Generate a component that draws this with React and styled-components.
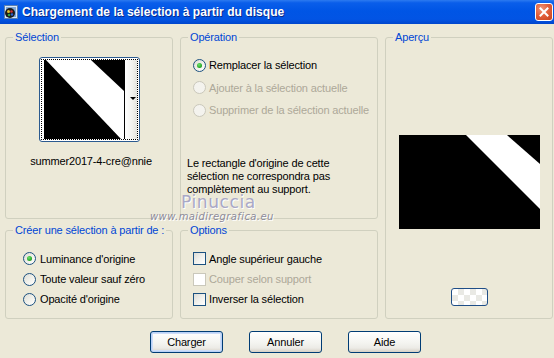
import React from "react";
import styled, { createGlobalStyle, css } from "styled-components";

const Global = createGlobalStyle`
  html, body { margin: 0; padding: 0; background: #ECE9D8; }
  body { font-family: "Liberation Sans", Arial, sans-serif; font-size: 11px; color: #000; letter-spacing: -0.15px; }
  * { box-sizing: border-box; }
`;

const Window = styled.div`
  position: relative;
  width: 554px;
  height: 358px;
  background: #ECE9D8;
  display: flex;
  flex-direction: column;
  overflow: hidden;
`;

const TitleBar = styled.div`
  height: 24px;
  display: flex;
  align-items: center;
  padding: 0 1px 0 3px;
  gap: 3px;
  background: linear-gradient(to bottom, #2C7AF0 0%, #0A5EEA 12%, #0055E5 45%, #0254E4 80%, #0046CC 100%);
`;

const Title = styled.div`
  flex: 1;
  color: #fff;
  font-weight: bold;
  font-size: 12px;
  letter-spacing: 0.05px;
  text-shadow: 1px 1px 0 #0A2A8A;
  white-space: nowrap;
`;

const CloseBtn = styled.div`
  width: 18px;
  height: 18px;
  border: 1px solid #fff;
  border-radius: 3px;
  background: radial-gradient(circle at 35% 30%, #F0957A 0%, #E2603C 45%, #C8411C 100%);
  display: flex;
  align-items: center;
  justify-content: center;
`;

const Content = styled.div`
  display: grid;
  grid-template-columns: 168px 198px 168px;
  grid-template-rows: 188px 95px;
  column-gap: 7px;
  row-gap: 5px;
  padding: 7px 0 0 5px;
`;

const Group = styled.fieldset`
  margin: 0;
  padding: ${(p) => p.$top || 0}px 0 0 0;
  min-width: 0;
  border: 1px solid #D0D0BF;
  border-radius: 3px;
  display: flex;
  flex-direction: column;
  align-items: ${(p) => p.$align || "stretch"};
  ${(p) => p.$span && css`grid-row: 1 / span 2; grid-column: 3;`}
`;

const Legend = styled.legend`
  color: #0046D5;
  padding: 0 2px;
  margin-left: 7px;
  line-height: 13px;
  font-size: 11px;
  white-space: nowrap;
`;

const Thumb = styled.div`
  margin-top: 13px;
  width: 101px;
  height: 85px;
  border: 1px solid #2B5A8F;
  border-radius: 3px;
  background: #fff;
  padding: 1px;
`;

const Focus = styled.div`
  height: 100%;
  border: 1px dotted #000;
  display: flex;
  padding-left: 2px;
`;

const DropStrip = styled.div`
  flex: 1;
  border-left: 1px solid #000;
  background: linear-gradient(to right, #ffffff, #F2F2EE 60%, #E4E4DE);
  display: flex;
  align-items: center;
  justify-content: flex-end;
  padding-right: 1px;
  padding-bottom: 2px;
`;

const Arrow = styled.div`
  width: 0;
  height: 0;
  border-left: 3px solid transparent;
  border-right: 3px solid transparent;
  border-top: 3px solid #000;
`;

const FileName = styled.div`
  margin-top: 13px;
  line-height: 13px;
  text-align: center;
  padding-left: 4px;
`;

const Rows = styled.div`
  display: flex;
  flex-direction: column;
  margin-left: ${(p) => p.$indent || 0}px;
`;

const Row = styled.label`
  height: ${(p) => p.$h || 22}px;
  display: flex;
  align-items: center;
  gap: 3px;
  color: ${(p) => (p.$disabled ? "#ACA899" : "#000")};
  white-space: nowrap;
`;

const Radio = styled.span`
  width: 13px;
  height: 13px;
  border-radius: 50%;
  flex: none;
  border: 1px solid ${(p) => (p.$disabled ? "#CAC8BB" : "#1C5180")};
  background: ${(p) =>
    p.$disabled
      ? "#F4F3EE"
      : "linear-gradient(135deg, #DCDCD5 0%, #F0F0EA 50%, #FFFFFF 100%)"};
  display: flex;
  align-items: center;
  justify-content: center;
  margin-right: ${(p) => p.$gap || 0}px;
  &::after {
    content: "";
    display: ${(p) => (p.$checked ? "block" : "none")};
    width: 5px;
    height: 5px;
    border-radius: 50%;
    background: radial-gradient(circle at 40% 35%, #6CE36C, #21A121 70%, #1A7F1A);
  }
`;

const Check = styled.span`
  width: 13px;
  height: 13px;
  flex: none;
  border: 1px solid ${(p) => (p.$disabled ? "#CAC8BB" : "#1C5180")};
  background: ${(p) =>
    p.$disabled ? "#FFFFFF" : "linear-gradient(135deg, #DCDCD7 0%, #F2F2EE 55%, #FFFFFF 100%)"};
`;

const Note = styled.p`
  margin: 36px 0 0 6px;
  line-height: 13px;
`;

const Preview = styled.div`
  margin-top: 91px;
  width: 141px;
  height: 94px;
  background: #000;
`;

const SmallBtn = styled.div`
  margin-top: 59px;
  width: 37px;
  height: 18px;
  border: 1px solid #1F4E87;
  border-radius: 3px;
  background-color: #fff;
  background-image:
    linear-gradient(45deg, #E9E9E4 25%, transparent 25%, transparent 75%, #E9E9E4 75%),
    linear-gradient(45deg, #E9E9E4 25%, transparent 25%, transparent 75%, #E9E9E4 75%);
  background-size: 12px 12px;
  background-position: 0 0, 6px 6px;
`;

const ButtonBar = styled.div`
  display: flex;
  gap: 26px;
  padding-left: 150px;
  margin-top: 12px;
`;

const Button = styled.button`
  width: 73px;
  height: 22px;
  padding: 0;
  font-family: inherit;
  font-size: 11px;
  letter-spacing: inherit;
  color: #000;
  border: 1px solid #003C74;
  border-radius: 3px;
  background: linear-gradient(to bottom, #FFFFFF 0%, #F4F4F0 55%, #ECEBE6 80%, #D6D0C5 100%);
  ${(p) =>
    p.$default &&
    css`
      box-shadow: inset 0 0 0 1px #B9D1F7, inset 0 0 0 2px #CEDDF8;
    `}
`;

const Watermark = styled.div`
  position: absolute;
  left: 150px;
  top: 193px;
  display: flex;
  flex-direction: column;
  align-items: flex-start;
  pointer-events: none;
`;

const WmName = styled.span`
  margin-left: 31px;
  font-family: "DejaVu Sans", sans-serif;
  font-size: 17px;
  line-height: 18px;
  letter-spacing: 0.6px;
  color: #A9A8C6;
  text-shadow: 1px 1px 0 #fff;
`;

const WmUrl = styled.span`
  font-family: "DejaVu Sans", sans-serif;
  font-size: 10px;
  line-height: 11px;
  font-style: italic;
  letter-spacing: 0.4px;
  color: #8E8C9A;
  text-shadow: 1px 1px 0 #fff;
`;

function AppIcon() {
  return (
    <svg width="16" height="16" viewBox="0 0 16 16">
      <rect x="1.5" y="1.5" width="13" height="13" fill="#DCE8F6" stroke="#5A7FB0" />
      <rect x="3" y="3" width="10" height="10" fill="#7FA8D8" />
      <circle cx="7" cy="9" r="5" fill="#1A1A1A" />
      <circle cx="5.5" cy="7.5" r="1.5" fill="#E0C030" />
      <circle cx="8.5" cy="7.5" r="1.3" fill="#D03030" />
      <circle cx="6" cy="11" r="1.3" fill="#30A040" />
      <circle cx="9" cy="10.5" r="1.2" fill="#3060D0" />
    </svg>
  );
}

function CloseIcon() {
  return (
    <svg width="10" height="10" viewBox="0 0 10 10">
      <path d="M1.5 1.5 L8.5 8.5 M8.5 1.5 L1.5 8.5" stroke="#fff" strokeWidth="2" strokeLinecap="square" />
    </svg>
  );
}

export default function App() {
  return (
    <>
      <Global />
      <Window>
        <TitleBar>
          <AppIcon />
          <Title>Chargement de la sélection à partir du disque</Title>
          <CloseBtn>
            <CloseIcon />
          </CloseBtn>
        </TitleBar>

        <Content>
          <Group $align="center">
            <Legend>Sélection</Legend>
            <Thumb>
              <Focus>
                <svg width="80" height="79" viewBox="0 0 80 79" style={{ display: "block", alignSelf: "center" }}>
                  <rect width="80" height="79" fill="#000" />
                  <polygon points="2,0 47,0 80,31 80,79 77,79" fill="#fff" />
                </svg>
                <DropStrip>
                  <Arrow />
                </DropStrip>
              </Focus>
            </Thumb>
            <FileName>summer2017-4-cre@nnie</FileName>
          </Group>

          <Group $top={10}>
            <Legend>Opération</Legend>
            <Rows $indent={12}>
              <Row $h={22}>
                <Radio $checked />
                Remplacer la sélection
              </Row>
              <Row $h={23} $disabled>
                <Radio $disabled />
                Ajouter à la sélection actuelle
              </Row>
              <Row $h={22} $disabled>
                <Radio $disabled />
                Supprimer de la sélection actuelle
              </Row>
            </Rows>
            <Note>
              Le rectangle d'origine de cette
              <br />
              sélection ne correspondra pas
              <br />
              complètement au support.
            </Note>
          </Group>

          <Group $span $align="center">
            <Legend>Aperçu</Legend>
            <Preview>
              <svg width="141" height="94" viewBox="0 0 141 94" style={{ display: "block" }}>
                <rect width="141" height="94" fill="#000" />
                <polygon points="67,0 108,0 141,29 141,74" fill="#fff" />
              </svg>
            </Preview>
            <SmallBtn />
          </Group>

          <Group $top={11}>
            <Legend>Créer une sélection à partir de :</Legend>
            <Rows $indent={17}>
              <Row $h={21}>
                <Radio $checked $gap={1} />
                Luminance d'origine
              </Row>
              <Row $h={20}>
                <Radio $gap={1} />
                Toute valeur sauf zéro
              </Row>
              <Row $h={20}>
                <Radio $gap={1} />
                Opacité d'origine
              </Row>
            </Rows>
          </Group>

          <Group $top={11}>
            <Legend>Options</Legend>
            <Rows $indent={12}>
              <Row $h={21}>
                <Check />
                Angle supérieur gauche
              </Row>
              <Row $h={20} $disabled>
                <Check $disabled />
                Couper selon support
              </Row>
              <Row $h={20}>
                <Check />
                Inverser la sélection
              </Row>
            </Rows>
          </Group>
        </Content>

        <ButtonBar>
          <Button $default>Charger</Button>
          <Button>Annuler</Button>
          <Button>Aide</Button>
        </ButtonBar>

        <Watermark>
          <WmName>Pinuccia</WmName>
          <WmUrl>www.maidiregrafica.eu</WmUrl>
        </Watermark>
      </Window>
    </>
  );
}
